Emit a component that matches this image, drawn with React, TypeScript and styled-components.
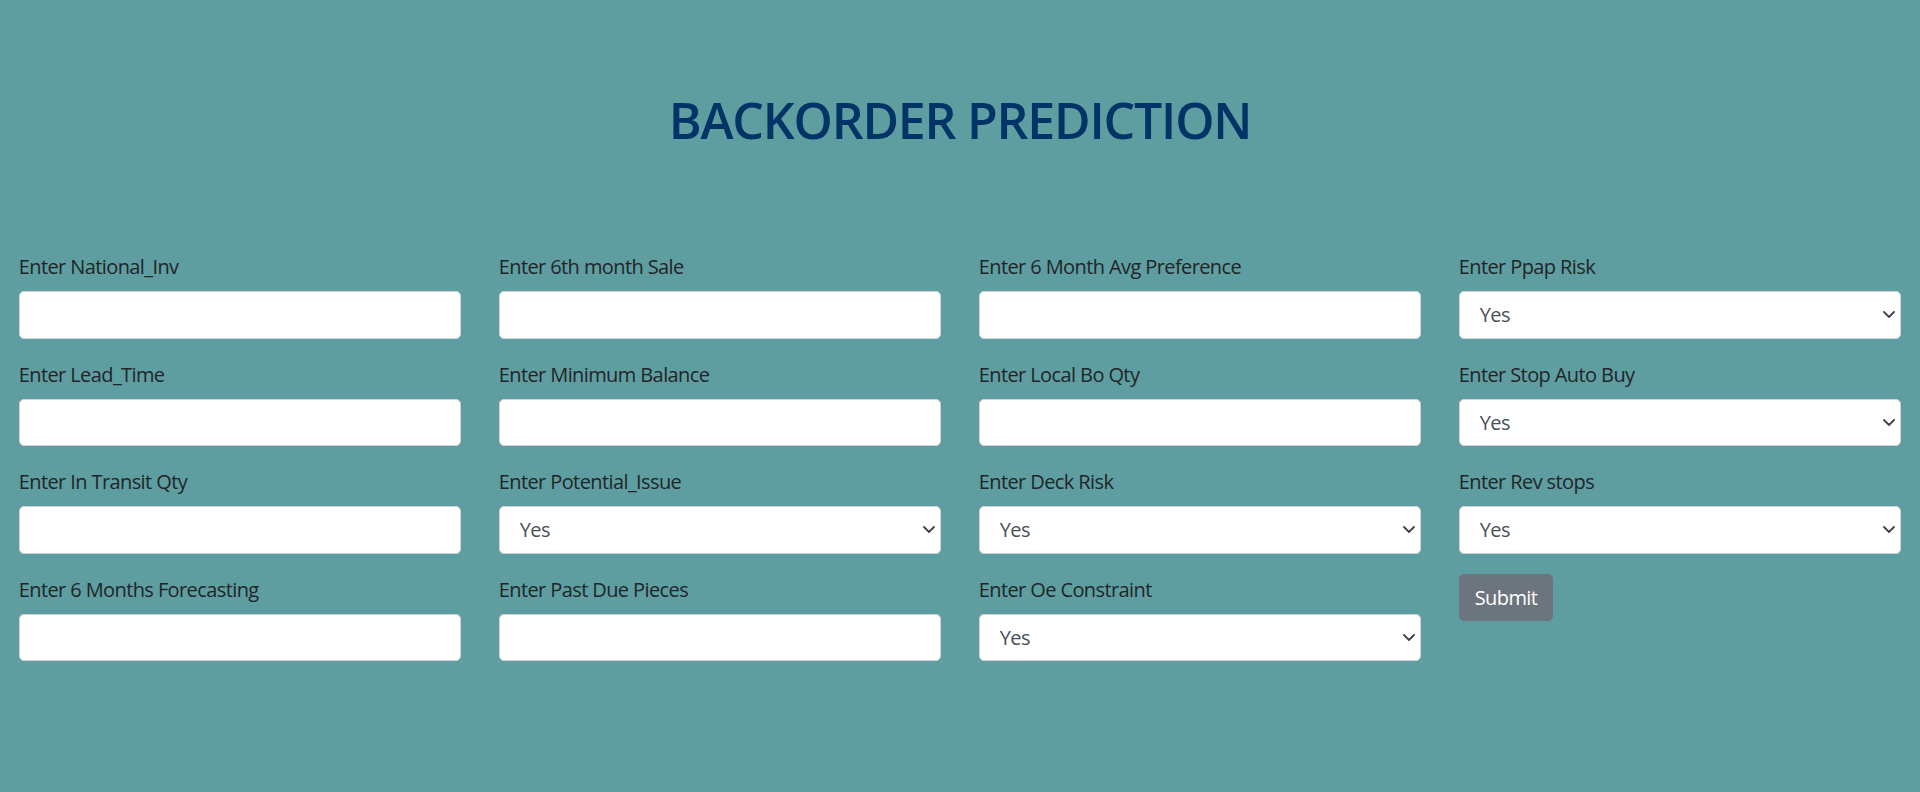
import React from "react";
import styled, { createGlobalStyle } from "styled-components";

const GlobalStyle = createGlobalStyle`
  html, body {
    margin: 0;
    padding: 0;
    background: #5f9ea0;
  }
  body {
    font-family: "Open Sans", "Noto Sans", "Liberation Sans", sans-serif;
    font-size: 20px;
    line-height: 1.5;
    color: #212529;
  }
  * { box-sizing: border-box; }
`;

const Page = styled.div`
  min-height: 792px;
  background: #5f9ea0;
  padding-top: 90px;
`;

const Title = styled.h1`
  margin: 0 0 101px 0;
  text-align: center;
  font-size: 50px;
  line-height: 60px;
  font-weight: 600;
  color: #003366;
  letter-spacing: -1.2px;
`;

const Grid = styled.form`
  display: grid;
  grid-template-columns: repeat(4, 1fr);
`;

const Column = styled.div`
  display: flex;
  flex-direction: column;
  padding: 0 18.75px;
`;

const Group = styled.div`
  display: flex;
  flex-direction: column;
  margin-bottom: 20px;
`;

const Label = styled.label`
  font-size: 20px;
  line-height: 30px;
  padding-top: 1px;
  margin-bottom: 9px;
  color: #212529;
  letter-spacing: -0.6px;
`;

const TextInput = styled.input`
  width: 100%;
  height: 47.5px;
  border: 1px solid #ced4da;
  border-radius: 5px;
  background: #fff;
  padding: 0 15px;
  font: inherit;
  color: #495057;
  outline: none;
`;

const SelectWrap = styled.div`
  position: relative;
  width: 100%;
`;

const Select = styled.select`
  width: 100%;
  height: 47.5px;
  border: 1px solid #ced4da;
  border-radius: 5px;
  background: #fff;
  padding: 0 15px 0 20px;
  font-family: inherit;
  font-size: 20px;
  color: #495057;
  appearance: none;
  -webkit-appearance: none;
  outline: none;
  letter-spacing: -0.6px;
`;

const Chevron = styled.svg`
  position: absolute;
  right: 6px;
  top: 50%;
  width: 12px;
  height: 7px;
  margin-top: -3.5px;
  pointer-events: none;
`;

const SubmitButton = styled.button`
  align-self: flex-start;
  height: 47.5px;
  padding: 0 15px;
  border: 1px solid #6c757d;
  border-radius: 5px;
  background: #6c757d;
  color: #fff;
  font-family: inherit;
  font-size: 20px;
  letter-spacing: -0.6px;
  cursor: pointer;
`;

type Field = { label: string; kind: "input" | "select" };

const columns: Field[][] = [
  [
    { label: "Enter National_Inv", kind: "input" },
    { label: "Enter Lead_Time", kind: "input" },
    { label: "Enter In Transit Qty", kind: "input" },
    { label: "Enter 6 Months Forecasting", kind: "input" },
  ],
  [
    { label: "Enter 6th month Sale", kind: "input" },
    { label: "Enter Minimum Balance", kind: "input" },
    { label: "Enter Potential_Issue", kind: "select" },
    { label: "Enter Past Due Pieces", kind: "input" },
  ],
  [
    { label: "Enter 6 Month Avg Preference", kind: "input" },
    { label: "Enter Local Bo Qty", kind: "input" },
    { label: "Enter Deck Risk", kind: "select" },
    { label: "Enter Oe Constraint", kind: "select" },
  ],
  [
    { label: "Enter Ppap Risk", kind: "select" },
    { label: "Enter Stop Auto Buy", kind: "select" },
    { label: "Enter Rev stops", kind: "select" },
  ],
];

const FieldGroup: React.FC<{ field: Field }> = ({ field }) => (
  <Group>
    <Label>{field.label}</Label>
    {field.kind === "input" ? (
      <TextInput type="text" />
    ) : (
      <SelectWrap>
        <Select defaultValue="Yes">
          <option>Yes</option>
          <option>No</option>
        </Select>
        <Chevron viewBox="0 0 12 7" fill="none">
          <path d="M1 1l5 5 5-5" stroke="#3f454b" strokeWidth="1.8" strokeLinecap="round" strokeLinejoin="round" />
        </Chevron>
      </SelectWrap>
    )}
  </Group>
);

export default function App() {
  return (
    <Page>
      <GlobalStyle />
      <Title>BACKORDER PREDICTION</Title>
      <Grid onSubmit={(e) => e.preventDefault()}>
        {columns.map((col, i) => (
          <Column key={i}>
            {col.map((f) => (
              <FieldGroup key={f.label} field={f} />
            ))}
            {i === 3 && <SubmitButton type="submit">Submit</SubmitButton>}
          </Column>
        ))}
      </Grid>
    </Page>
  );
}
